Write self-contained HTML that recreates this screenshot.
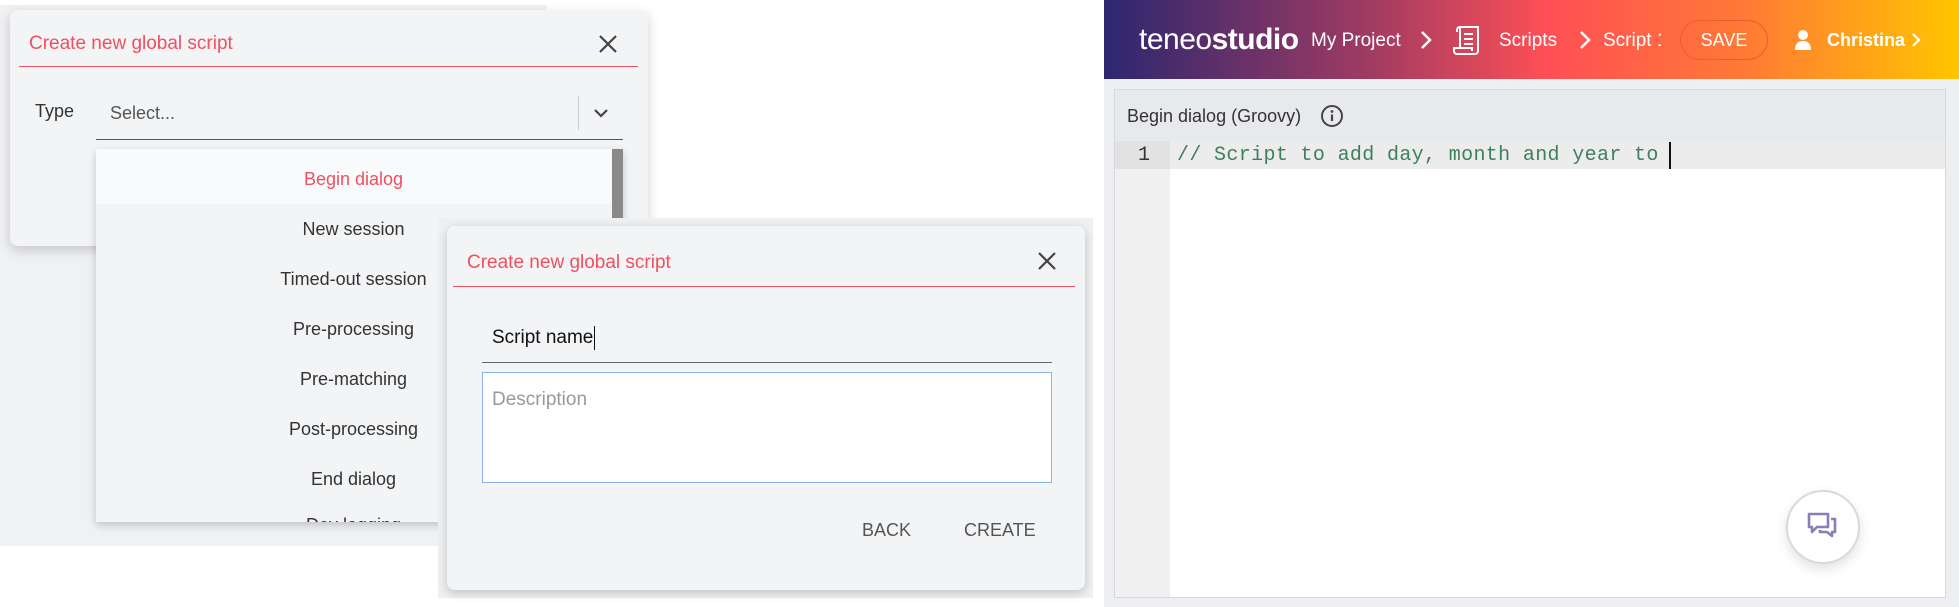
<!DOCTYPE html>
<html><head><meta charset="utf-8"><style>
*{margin:0;padding:0;box-sizing:border-box}
body{width:1959px;height:607px;background:#fff;position:relative;overflow:hidden;font-family:"Liberation Sans",sans-serif}
.a{position:absolute}
.red{color:#f0505f}
.t{white-space:nowrap}
</style></head><body>
<div class="a" style="left:0;top:5px;width:546px;height:541px;background:#f0f1f3"></div>
<div class="a" style="left:10px;top:10px;width:638px;height:236px;background:#f3f4f6;border-radius:8px;box-shadow:0 4px 12px rgba(0,0,0,.18)"></div>
<div class="a t red" style="left:29px;top:33px;font-size:19px">Create new global script</div>
<svg class="a" style="left:598px;top:34px" width="20" height="20"><path d="M2 2L18 18M18 2L2 18" stroke="#444" stroke-width="2.2"/></svg>
<div class="a" style="left:19px;top:66px;width:619px;height:1px;background:#f0505f"></div>
<div class="a t" style="left:35px;top:101px;font-size:18px;color:#333">Type</div>
<div class="a t" style="left:110px;top:103px;font-size:18px;color:#555">Select...</div>
<div class="a" style="left:578px;top:96px;width:1px;height:34px;background:#ccc"></div>
<svg class="a" style="left:593px;top:107px" width="16" height="12"><path d="M2 3L8 9L14 3" stroke="#444" stroke-width="2.2" fill="none"/></svg>
<div class="a" style="left:96px;top:139px;width:527px;height:1px;background:#555"></div>
<div class="a" style="left:96px;top:149px;width:527px;height:373px;background:#f3f4f6;box-shadow:0 3px 8px rgba(0,0,0,.2);overflow:hidden">
 <div class="a" style="left:0;top:0;width:515px;height:55px;background:#f9fafb"></div>
 <div class="a" style="right:0;top:0;width:11px;height:70px;background:#8a8a8a"></div>
 <div class="a" style="left:0;width:515px;text-align:center;font-size:18px;color:#333;top:20px"><span class="red">Begin dialog</span></div>
 <div class="a" style="left:0;width:515px;text-align:center;font-size:18px;color:#333;top:70px">New session</div>
 <div class="a" style="left:0;width:515px;text-align:center;font-size:18px;color:#333;top:120px">Timed-out session</div>
 <div class="a" style="left:0;width:515px;text-align:center;font-size:18px;color:#333;top:170px">Pre-processing</div>
 <div class="a" style="left:0;width:515px;text-align:center;font-size:18px;color:#333;top:220px">Pre-matching</div>
 <div class="a" style="left:0;width:515px;text-align:center;font-size:18px;color:#333;top:270px">Post-processing</div>
 <div class="a" style="left:0;width:515px;text-align:center;font-size:18px;color:#333;top:320px">End dialog</div>
 <div class="a" style="left:0;width:515px;text-align:center;font-size:18px;color:#333;top:366px">Dev logging</div>
</div>
<div class="a" style="left:438px;top:218px;width:655px;height:380px;background:#eef0f2"></div>
<div class="a" style="left:447px;top:226px;width:638px;height:364px;background:#f3f4f6;border-radius:8px;box-shadow:0 3px 10px rgba(0,0,0,.2)"></div>
<div class="a t red" style="left:467px;top:252px;font-size:19px">Create new global script</div>
<svg class="a" style="left:1037px;top:251px" width="20" height="20"><path d="M2 2L18 18M18 2L2 18" stroke="#444" stroke-width="2.2"/></svg>
<div class="a" style="left:453px;top:286px;width:622px;height:1px;background:#f0505f"></div>
<div class="a t" style="left:492px;top:326px;font-size:19px;color:#111">Script name<span style="display:inline-block;width:1px;height:24px;background:#111;vertical-align:middle;margin-left:1px"></span></div>
<div class="a" style="left:482px;top:362px;width:570px;height:1px;background:#666"></div>
<div class="a" style="left:482px;top:372px;width:570px;height:111px;background:#fff;border:1px solid #8ab4f0"></div>
<div class="a t" style="left:492px;top:389px;font-size:19px;color:#999">Description</div>
<div class="a t" style="left:862px;top:520px;font-size:18px;color:#555">BACK</div>
<div class="a t" style="left:964px;top:520px;font-size:18px;color:#555">CREATE</div>
<div class="a" style="left:1104px;top:0;width:855px;height:79px;background:linear-gradient(90deg,#2c2770 0%,#9c3a62 30%,#ff4f55 52%,#ff7a35 75%,#ffc500 100%)"></div>
<div class="a t" style="left:1139px;top:23px;font-size:30px;color:#fff;letter-spacing:-0.5px">teneo<b>studio</b></div>
<div class="a t" style="left:1311px;top:30px;font-size:19px;color:#fff">My Project</div>
<svg class="a" style="left:1419px;top:30px" width="14" height="20"><path d="M3 2L11 10L3 18" stroke="#fff" stroke-width="2.5" fill="none"/></svg>
<svg class="a" style="left:1452px;top:24px" width="30" height="32"><path d="M8 3H26V27a3 3 0 0 1-3 3H5a3 3 0 0 1-3-3V24H20V27M8 3V24M8 3a3 3 0 0 0-3 3V8M12 10H21M12 15H21M12 20H21" stroke="#fff" stroke-width="2" fill="none"/></svg>
<div class="a t" style="left:1499px;top:30px;font-size:19px;color:#fff">Scripts</div>
<svg class="a" style="left:1578px;top:30px" width="14" height="20"><path d="M3 2L11 10L3 18" stroke="#fff" stroke-width="2.5" fill="none"/></svg>
<div class="a t" style="left:1603px;top:30px;font-size:19px;color:#fff;width:58px;overflow:hidden">Script 1</div>
<div class="a" style="left:1680px;top:20px;width:88px;height:40px;border:1.5px solid #e85e30;border-radius:20px;color:#fff;font-size:18px;text-align:center;line-height:38px">SAVE</div>
<svg class="a" style="left:1794px;top:29px" width="18" height="22"><circle cx="9" cy="6" r="5" fill="#fff"/><path d="M1 21C1 14 5 12 9 12S17 14 17 21Z" fill="#fff"/></svg>
<div class="a t" style="left:1827px;top:30px;font-size:18px;color:#fff;font-weight:bold">Christina</div>
<svg class="a" style="left:1910px;top:32px" width="12" height="16"><path d="M3 2L9 8L3 14" stroke="#fff" stroke-width="2.2" fill="none"/></svg>
<div class="a" style="left:1104px;top:79px;width:855px;height:528px;background:#eceef1"></div>
<div class="a" style="left:1114px;top:89px;width:832px;height:509px;background:#fff;border:1px solid #d6d8dc"></div>
<div class="a" style="left:1115px;top:90px;width:830px;height:51px;background:#e8e9ec"></div>
<div class="a t" style="left:1127px;top:106px;font-size:18px;color:#333">Begin dialog (Groovy)</div>
<svg class="a" style="left:1320px;top:104px" width="24" height="24"><circle cx="12" cy="12" r="10" stroke="#444" stroke-width="2" fill="none"/><circle cx="12" cy="7.5" r="1.4" fill="#444"/><path d="M12 10.5V17" stroke="#444" stroke-width="2.2"/></svg>
<div class="a" style="left:1115px;top:141px;width:55px;height:456px;background:#f0f0f0"></div>
<div class="a" style="left:1115px;top:141px;width:830px;height:28px;background:#ececec"></div>
<div class="a" style="left:1115px;top:141px;width:55px;height:28px;background:#e2e2e2"></div>
<div class="a t" style="left:1138px;top:144px;font-family:'Liberation Mono',monospace;font-size:20px;color:#333">1</div>
<div class="a t" style="left:1177px;top:144px;font-family:'Liberation Mono',monospace;font-size:20px;color:#3e7f5e;letter-spacing:0.35px">// Script to add day, month and year to </div>
<div class="a" style="left:1669px;top:142px;width:2px;height:27px;background:#111"></div>
<div class="a" style="left:1786px;top:490px;width:74px;height:74px;border-radius:50%;background:#fff;border:2px solid #d8d9e0;box-shadow:0 5px 12px rgba(0,0,0,.12)"></div>
<svg class="a" style="left:1806px;top:511px" width="34" height="32"><path d="M3 3H22V16H11L6 21V16H3Z" stroke="#8a7fb5" stroke-width="2.6" fill="none" stroke-linejoin="round"/><path d="M25 8H29V21H26V25L21 21H14V19" stroke="#8a7fb5" stroke-width="2.6" fill="none" stroke-linejoin="round"/></svg>
</body></html>
